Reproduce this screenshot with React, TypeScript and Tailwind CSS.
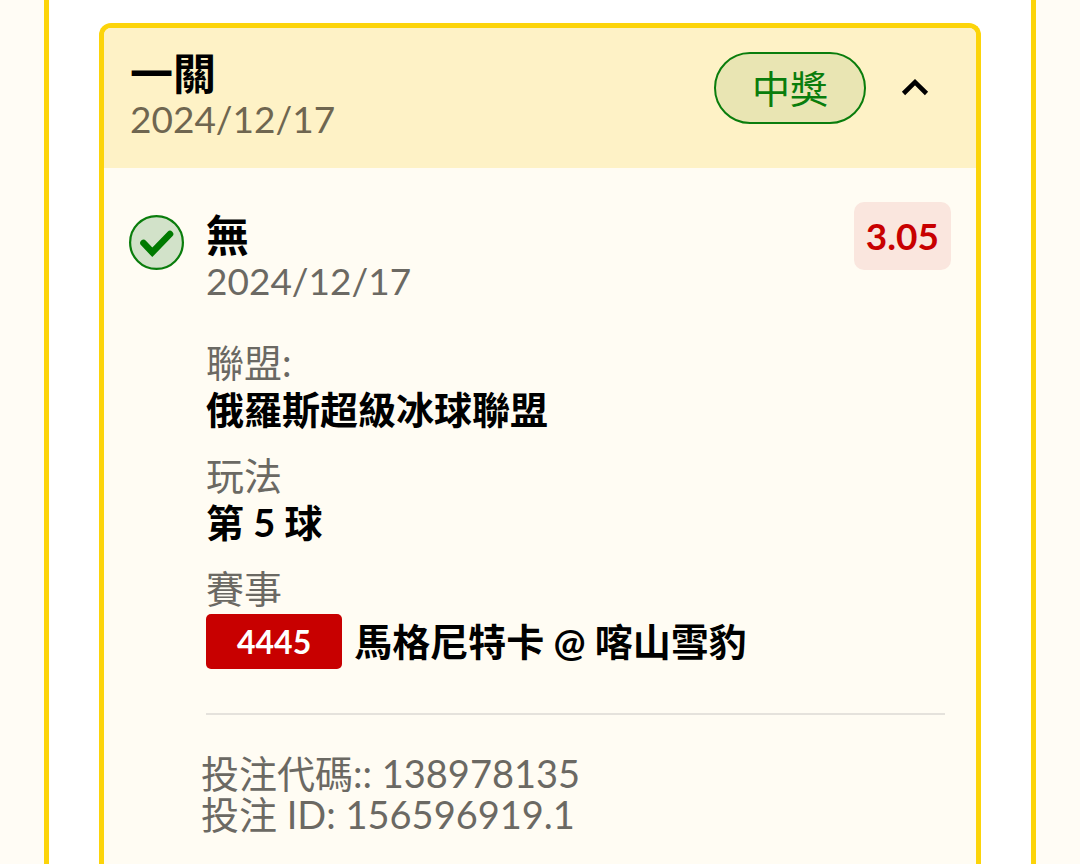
import React, { useState } from 'react';

interface Leg {
  title: string;
  date: string;
  odds: string;
  league: string;
  market: string;
  matchCode: string;
  match: string;
}

const leg: Leg = {
  title: '無',
  date: '2024/12/17',
  odds: '3.05',
  league: '俄羅斯超級冰球聯盟',
  market: '第 5 球',
  matchCode: '4445',
  match: '馬格尼特卡 @ 喀山雪豹',
};

const WonIcon = () => (
  <svg className="shrink-0" width="56" height="56" viewBox="0 0 56 56" fill="none" aria-hidden="true">
    <circle cx="27.5" cy="28.5" r="26.4" fill="#d2e2c9" stroke="#0a7d0c" strokeWidth="2.2" />
    <path d="M14.5 29 L23.3 38.3 L41 20" stroke="#007a00" strokeWidth="6.6" strokeLinecap="round" />
  </svg>
);

const ChevronUp = () => (
  <svg width="28" height="18" viewBox="0 0 28 18" fill="none" aria-hidden="true">
    <path d="M2.5 14.5 L14 3.2 L25.5 14.5" stroke="#000" strokeWidth="4.6" />
  </svg>
);

const Field = ({ label, children }: { label: string; children: React.ReactNode }) => (
  <div>
    <dt className="text-[#6b6963]">{label}</dt>
    <dd className="font-bold text-black">{children}</dd>
  </div>
);

const LegDetails = ({ item }: { item: Leg }) => (
  <div className="flex px-[25px] pt-[46px]">
    <WonIcon />
    <div className="ml-[21px] flex-1 min-w-0">
      <div className="flex justify-between items-start">
        <div>
          <h3 className="text-[43px] leading-[44px] font-bold text-black">{item.title}</h3>
          <p className="text-[37px] leading-[46px] text-[#6b6963]">{item.date}</p>
        </div>
        <span className="-mt-3 px-3 rounded-[10px] bg-[#fae6de] text-[37px] leading-[68px] font-bold text-[#c80000]">
          {item.odds}
        </span>
      </div>

      <dl className="mt-[35px] space-y-[19px] text-[38px] leading-[47px]">
        <Field label="聯盟:">{item.league}</Field>
        <Field label="玩法">{item.market}</Field>
        <Field label="賽事">
          <span className="flex items-center gap-3 pt-0.5">
            <span className="px-[31px] rounded-[5px] bg-[#c80000] text-[32px] leading-[55px] text-white">{item.matchCode}</span>
            <span>{item.match}</span>
          </span>
        </Field>
      </dl>

      <hr className="mt-11 mr-[6px] border-t-2 border-[#e5e2dc]" />
    </div>
  </div>
);

export default function App() {
  const [isOpen, setIsOpen] = useState(true);

  return (
    <div className="min-h-screen flex flex-col px-11 bg-[#fffcf5] font-['Lato','Noto_Sans_CJK_TC',sans-serif]">
      <main className="flex-1 flex flex-col px-[50px] pt-[23px] bg-white border-x-[5px] border-[#fcd40a]">
        <section className="flex-1 bg-[#fffcf3] border-[5px] border-b-0 border-[#fcd40a] rounded-t-[12px]">
          <header className="flex justify-between items-start pl-[26px] pr-[47px] pt-6 pb-[26px] bg-[#fef2c6] rounded-t-[7px]">
            <div>
              <h2 className="text-[43px] leading-[44px] font-bold text-black">一關</h2>
              <p className="text-[37px] leading-[46px] text-[#6f6650]">2024/12/17</p>
            </div>
            <div className="flex items-center gap-[35px]">
              <span className="px-9 rounded-full border-2 border-[#0a7d0c] bg-[#e9e5b3] text-[38px] leading-[68px] text-[#0a7d0c]">
                中獎
              </span>
              <button type="button" aria-label="收合" aria-expanded={isOpen} className="cursor-pointer" onClick={() => setIsOpen(!isOpen)}>
                <ChevronUp />
              </button>
            </div>
          </header>

          {isOpen && (
            <>
              <LegDetails item={leg} />
              <div className="pl-[97px] pt-[38px] text-[38px] leading-[41px] text-[#6b6963]">
                <p>投注代碼:: 138978135</p>
                <p>投注 ID: 156596919.1</p>
              </div>
            </>
          )}
        </section>
      </main>
    </div>
  );
}
